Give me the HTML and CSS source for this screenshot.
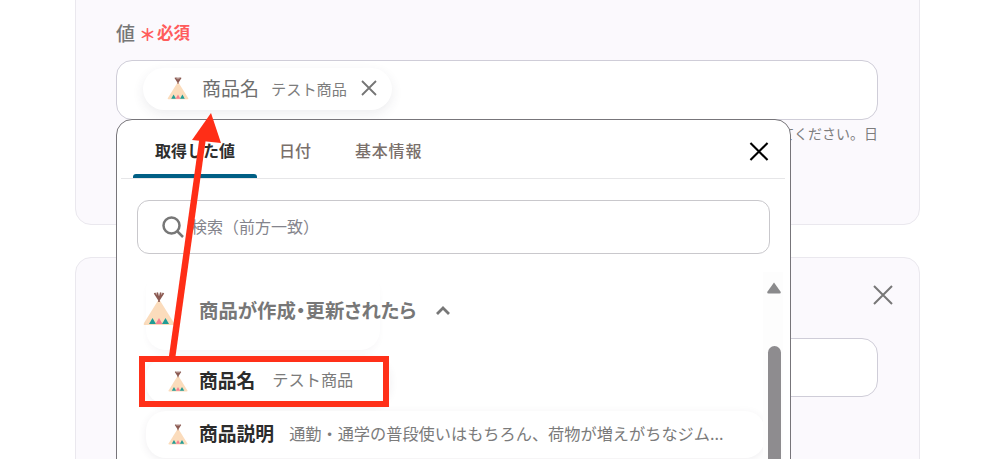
FILE: index.html
```html
<!DOCTYPE html>
<html lang="ja">
<head>
<meta charset="utf-8">
<title>値の設定</title>
<link rel="stylesheet" href="styles.css">
</head>
<body>
<svg class="defs" width="0" height="0" aria-hidden="true">
  <symbol id="tipi" viewBox="0 0 32 34">
    <path d="M16 7 L31 31 Q32 33 30 33 L2 33 Q0 33 1 31 Z" fill="#fbdcbc"/>
    <path d="M16 10 L16 5 M16 8 L11.500 1 M16 8 L20.500 1 M15.500 6 L14.200 0.500 M16.500 6 L17.800 0.500" stroke="#8b5a52" stroke-width="1.700" fill="none"/>
    <path d="M6 32 L9.500 26 L13 32 Z" fill="#1f9c96"/>
    <path d="M12.500 32 L16 26 L19.500 32 Z" fill="#f77f8e"/>
    <path d="M19 32 L22.500 26 L26 32 Z" fill="#1f9c96"/>
  </symbol>
</svg>
<div class="stage">
  <div class="cards">
    <section class="card card-first">
      <div class="label-row">
        <span class="label">値</span>
        <span class="asterisk">＊</span>
        <span class="required">必須</span>
      </div>
      <div class="field">
        <div class="chip">
          <svg class="chip-icon"><use href="#tipi"/></svg>
          <span class="chip-name">商品名</span>
          <span class="chip-value">テスト商品</span>
          <svg class="chip-x" viewBox="0 0 16 16"><path d="M1 1 L15 15 M15 1 L1 15"/></svg>
        </div>
      </div>
      <p class="help">てください。日</p>
    </section>
    <section class="card card-second">
      <svg class="card-x" viewBox="0 0 20 20"><path d="M1 1 L19 19 M19 1 L1 19"/></svg>
      <div class="field field-second"></div>
    </section>
  </div>

  <div class="popup">
    <div class="tabs">
      <span class="tab tab-active">取得した値</span>
      <span class="tab">日付</span>
      <span class="tab">基本情報</span>
      <svg class="popup-x" viewBox="0 0 20 20"><path d="M1 1 L19 19 M19 1 L1 19"/></svg>
    </div>
    <div class="search">
      <svg class="search-icon" viewBox="0 0 22 22"><circle cx="9.500" cy="9.500" r="8"/><path d="M15.500 15.500 L21 21"/></svg>
      <span class="search-text">検索（前方一致）</span>
    </div>
    <div class="list">
      <div class="scrollbar">
        <svg class="scroll-up" viewBox="0 0 14 12"><path d="M7 0.500 L13.800 10 Q14 11.500 12.500 11.500 L1.500 11.500 Q0 11.500 0.200 10 Z"/></svg>
        <div class="scroll-thumb"></div>
      </div>
      <div class="group">
        <svg class="group-icon"><use href="#tipi"/></svg>
        <span class="group-title">商品が作成・更新されたら</span>
        <svg class="chevron" viewBox="0 0 16 11"><path d="M2 9 L8 3 L14 9"/></svg>
      </div>
      <div class="row row-first">
        <svg class="row-icon"><use href="#tipi"/></svg>
        <span class="row-name">商品名</span>
        <span class="row-value">テスト商品</span>
      </div>
      <div class="row">
        <svg class="row-icon"><use href="#tipi"/></svg>
        <span class="row-name">商品説明</span>
        <span class="row-value row-desc">通勤・通学の普段使いはもちろん、荷物が増えがちなジム...</span>
      </div>
    </div>
  </div>

  <div class="highlight"></div>
  <svg class="arrow" viewBox="0 0 997 459">
    <path d="M172 358 L203 136" stroke="#ff2e17" stroke-width="6.500" fill="none"/>
    <path d="M211 113 L221 143 L192 140 Z" fill="#ff2e17"/>
  </svg>
</div>
</body>
</html>
```
FILE: styles.css
```css
* { box-sizing: border-box; }
html, body { margin: 0; padding: 0; background: #fff; }
body { font-family: "Noto Sans CJK JP", "Noto Sans", sans-serif; color: #777; }
.defs { position: absolute; }
.stage { position: relative; width: 997px; height: 459px; overflow: hidden; }

.cards { display: flex; flex-direction: column; gap: 32px; margin-top: -20px; padding: 0 77px 0 75px; }
.card { position: relative; background: #fbf9fd; border: 1px solid #eae8ee; border-radius: 16px; padding: 0 41px 0 40px; }
.card-first { height: 245px; padding-top: 36px; }
.card-second { height: 260px; padding-top: 80px; }

.label-row { display: flex; align-items: center; height: 30px; margin-bottom: 13px; }
.label { font-size: 19px; color: #777; font-weight: 500; }
.asterisk { font-size: 17px; line-height: 20px; color: #ff5c5c; margin: 3px 0 0 4px; font-weight: 700; }
.required { font-size: 16.500px; color: #ff5c5c; margin-left: 1px; font-weight: 700; }

.field { height: 60px; background: #fff; border: 1px solid #cfcdd8; border-radius: 16px; padding: 7px 0 0 26px; }
.field-second { height: 59px; }
.chip { display: inline-flex; align-items: center; height: 42px; width: 249px; background: #fff; border-radius: 21px; box-shadow: 0 4px 12px rgba(60, 50, 80, .09); padding-left: 24px; }
.chip-icon { width: 22px; height: 23px; flex: none; margin-top: -2px; }
.chip-name { font-size: 19px; color: #6f6f6f; margin: -3px 0 0 13px; font-weight: 400; }
.chip-value { font-size: 15.200px; color: #7d7d7d; margin: -3px 0 0 12px; }
.chip-x { width: 16px; height: 16px; margin: -2px 0 0 14px; }
.chip-x path { stroke: #757575; stroke-width: 1.800; fill: none; }
.help { margin: 3px 0 0; text-align: right; font-size: 14px; line-height: 20px; color: #7d7d7d; }
.card-x { position: absolute; top: 27px; left: 797px; width: 20px; height: 20px; }
.card-x path { stroke: #777; stroke-width: 2; fill: none; }

.popup { position: absolute; left: 116px; top: 119px; width: 675px; height: 360px; background: #fff; border: 1px solid #77757a; border-radius: 16px; }
.tabs { position: relative; display: flex; height: 59px; margin: 0 5px 0 4px; border-bottom: 1px solid #e6e6e8; padding-left: 12px; }
.tab { font-size: 16px; line-height: 22px; padding: 19px 22px 0; color: #7a6f6a; font-weight: 500; }
.tab:last-of-type { letter-spacing: .8px; }
.tab-active { position: relative; color: #2e2e2e; width: 124px; padding-left: 22px; font-weight: 700; }
.tab-active::after { content: ""; position: absolute; left: 0; right: 0; bottom: 0; height: 4px; background: #005f85; border-radius: 3px 3px 0 0; }
.popup-x { position: absolute; left: 628px; top: 22px; width: 20px; height: 19px; }
.popup-x path { stroke: #000; stroke-width: 2.200; fill: none; }

.search { display: flex; align-items: center; height: 54px; margin: 21px 20px 0; width: 633px; border: 1px solid #c9c8cc; border-radius: 12px; padding: 0 0 2px 24px; }
.search-icon { width: 22px; height: 22px; flex: none; margin-top: 2px; }
.search-icon circle, .search-icon path { stroke: #777; stroke-width: 2.500; fill: none; }
.search-text { font-size: 16px; color: #84848c; margin-left: 7px; }

.list { position: relative; padding-top: 37px; }
.scrollbar { position: absolute; left: 646px; top: 18px; width: 20px; height: 240px; background: #fdfdfd; padding-left: 4px; }
.scroll-up { display: block; width: 14px; height: 12px; margin: 10px 0 0 0; }
.scroll-up path { fill: #8a8a8c; }
.scroll-thumb { width: 13px; height: 200px; margin: 52px 0 0 1px; background: #8e8c8f; border-radius: 7px; }

.group { position: relative; display: flex; align-items: center; height: 36px; padding-left: 26px; }
.group::after { content: ""; position: absolute; left: 29px; top: -20px; width: 234px; height: 79px; border-radius: 20px; box-shadow: 0 5px 8px -3px rgba(60, 50, 80, .06); }
.group-icon { width: 32px; height: 34px; flex: none; }
.group-title { font-size: 19.400px; font-weight: 700; color: #777; margin-left: 24px; font-feature-settings: "palt"; }
.chevron { width: 16px; height: 11px; margin-left: 19px; margin-top: 2px; }
.chevron path { stroke: #777; stroke-width: 2.800; fill: none; }

.row { display: flex; align-items: center; height: 47px; margin: 0 0 0 29px; width: 619px; background: #fff; border-radius: 20px; box-shadow: 0 2px 8px rgba(60, 50, 80, .08); padding: 0 0 0 22px; }
.row-first { margin-top: 31px; margin-bottom: 7px; height: 46px; width: 244px; }
.row-icon { width: 20px; height: 21px; flex: none; }
.row-name { font-size: 18.800px; font-weight: 700; color: #2c2c2c; margin: -4px 0 0 11px; }
.row-value { font-size: 16.200px; color: #7b7b7b; margin: -4px 0 0 17px; white-space: nowrap; }
.row-desc { margin-left: 15px; }

.highlight { position: absolute; left: 139px; top: 356px; width: 250px; height: 51px; border: 6px solid #ff3019; }
.arrow { position: absolute; left: 0; top: 0; width: 997px; height: 459px; }
```
